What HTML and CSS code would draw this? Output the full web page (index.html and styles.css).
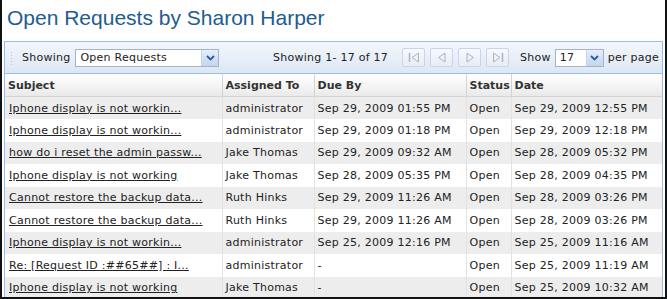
FILE: index.html
```html
<!DOCTYPE html>
<html lang="en">
<head>
    <meta charset="UTF-8">
    <meta name="viewport" content="width=device-width, initial-scale=1.0">
    <title>Open Requests</title>
    <link rel="stylesheet" href="styles.css">
</head>
<body>
<div class="frame">

    <h1 class="title">Open Requests by Sharon Harper</h1>

    <div class="panel">
        <div class="toolbar">
            <span class="handle"></span>
            <span class="label">Showing</span>
            <div class="combo combo-filter">
                <span class="combo-text">Open Requests</span>
                <span class="combo-btn">
                    <svg width="9" height="6" viewBox="0 0 9 6"><path d="M1 1 L4.5 4.5 L8 1" fill="none" stroke="#2b5d9c" stroke-width="1.8"/></svg>
                </span>
            </div>

            <div class="pager">
                <span class="label">Showing 1- 17 of 17</span>
                <div class="pager-btns">
                    <span class="pbtn">
                        <svg width="12" height="11" viewBox="0 0 12 11"><path d="M1.5 1 V10" stroke="#a9b4c4" stroke-width="1.5"/><path d="M10.5 1 L4 5.5 L10.5 10 Z" fill="#eef1f6" stroke="#a9b4c4"/></svg>
                    </span>
                    <span class="pbtn">
                        <svg width="12" height="11" viewBox="0 0 12 11"><path d="M9 1 L2.5 5.5 L9 10 Z" fill="#eef1f6" stroke="#a9b4c4"/></svg>
                    </span>
                    <span class="pbtn">
                        <svg width="12" height="11" viewBox="0 0 12 11"><path d="M3 1 L9.5 5.5 L3 10 Z" fill="#eef1f6" stroke="#a9b4c4"/></svg>
                    </span>
                    <span class="pbtn">
                        <svg width="12" height="11" viewBox="0 0 12 11"><path d="M1.5 1 L8 5.5 L1.5 10 Z" fill="#eef1f6" stroke="#a9b4c4"/><path d="M10.5 1 V10" stroke="#a9b4c4" stroke-width="1.5"/></svg>
                    </span>
                </div>
                <span class="label">Show</span>
                <div class="combo combo-size">
                    <span class="combo-text">17</span>
                    <span class="combo-btn">
                        <svg width="9" height="6" viewBox="0 0 9 6"><path d="M1 1 L4.5 4.5 L8 1" fill="none" stroke="#2b5d9c" stroke-width="1.8"/></svg>
                    </span>
                </div>
                <span class="label">per page</span>
            </div>
        </div>

        <table class="grid">
            <colgroup>
                <col style="width: 217px">
                <col style="width: 92px">
                <col style="width: 152px">
                <col style="width: 45px">
                <col>
            </colgroup>
            <thead>
                <tr>
                    <th>Subject</th>
                    <th>Assigned To</th>
                    <th>Due By</th>
                    <th>Status</th>
                    <th>Date</th>
                </tr>
            </thead>
            <tbody>
                <tr>
                    <td><a href="#">Iphone display is not workin...</a></td>
                    <td>administrator</td>
                    <td>Sep 29, 2009 01:55 PM</td>
                    <td>Open</td>
                    <td>Sep 29, 2009 12:55 PM</td>
                </tr>
                <tr>
                    <td><a href="#">Iphone display is not workin...</a></td>
                    <td>administrator</td>
                    <td>Sep 29, 2009 01:18 PM</td>
                    <td>Open</td>
                    <td>Sep 29, 2009 12:18 PM</td>
                </tr>
                <tr>
                    <td><a href="#">how do i reset the admin passw...</a></td>
                    <td>Jake Thomas</td>
                    <td>Sep 29, 2009 09:32 AM</td>
                    <td>Open</td>
                    <td>Sep 28, 2009 05:32 PM</td>
                </tr>
                <tr>
                    <td><a href="#">Iphone display is not working</a></td>
                    <td>Jake Thomas</td>
                    <td>Sep 28, 2009 05:35 PM</td>
                    <td>Open</td>
                    <td>Sep 28, 2009 04:35 PM</td>
                </tr>
                <tr>
                    <td><a href="#">Cannot restore the backup data...</a></td>
                    <td>Ruth Hinks</td>
                    <td>Sep 29, 2009 11:26 AM</td>
                    <td>Open</td>
                    <td>Sep 28, 2009 03:26 PM</td>
                </tr>
                <tr>
                    <td><a href="#">Cannot restore the backup data...</a></td>
                    <td>Ruth Hinks</td>
                    <td>Sep 29, 2009 11:26 AM</td>
                    <td>Open</td>
                    <td>Sep 28, 2009 03:26 PM</td>
                </tr>
                <tr>
                    <td><a href="#">Iphone display is not workin...</a></td>
                    <td>administrator</td>
                    <td>Sep 25, 2009 12:16 PM</td>
                    <td>Open</td>
                    <td>Sep 25, 2009 11:16 AM</td>
                </tr>
                <tr>
                    <td><a href="#">Re: [Request ID :##65##] : I...</a></td>
                    <td>administrator</td>
                    <td>-</td>
                    <td>Open</td>
                    <td>Sep 25, 2009 11:19 AM</td>
                </tr>
                <tr>
                    <td><a href="#">Iphone display is not working</a></td>
                    <td>Jake Thomas</td>
                    <td>-</td>
                    <td>Open</td>
                    <td>Sep 25, 2009 10:32 AM</td>
                </tr>
            </tbody>
        </table>
    </div>

</div>
</body>
</html>
```

FILE: styles.css
```css
body {
    margin: 0;
    background-color: white;
}

.frame {
    height: 299px;
    box-sizing: border-box;
    border: 2px solid #111; /* dark window edge */
    border-top: none;
    padding: 0 2px;
    overflow: hidden;
}

.title {
    margin: 0;
    height: 41px;
    box-sizing: border-box;
    padding: 6px 0 0 3px;
    font-family: "Liberation Sans", Arial, sans-serif;
    font-size: 21px;
    font-weight: normal;
    line-height: 23px;
    color: #215c91;
}

.panel {
    border: 1px solid #99bbe8;
    font-family: "DejaVu Sans", Verdana, sans-serif;
    font-size: 11px;
    letter-spacing: 0.25px;
    color: #222;
}

/* top toolbar */
.toolbar {
    display: flex;
    align-items: center;
    height: 31px;
    padding: 0 3px 0 5px;
    background: linear-gradient(#f4f7fc, #dce7f4);
    border-bottom: 1px solid #99bbe8;
}

.handle {
    width: 3px;
    height: 14px;
    margin-right: 9px;
    background-image: radial-gradient(circle, #b7c6d9 0.8px, transparent 1px);
    background-size: 3px 3px;
}

.label {
    white-space: nowrap;
    color: #222;
}

.combo {
    display: flex;
    align-items: center;
    height: 18px;
    box-sizing: border-box;
    border: 1px solid #a5b3c8;
    background-color: white;
}

.combo-filter {
    width: 144px;
    margin-left: 5px;
}

.combo-size {
    width: 49px;
    margin: 0 4px;
}

.combo-text {
    flex: 1;
    padding-left: 4px;
    white-space: nowrap;
}

.combo-btn {
    display: flex;
    align-items: center;
    justify-content: center;
    width: 16px;
    height: 16px;
    background: linear-gradient(#e6eefa, #c3d5ee);
    border-left: 1px solid #c7d5e8;
}

.pager {
    display: flex;
    align-items: center;
    margin-left: auto;
}

.pager-btns {
    display: flex;
    gap: 5px;
    margin: 0 11px 0 14px;
}

.pbtn {
    display: flex;
    align-items: center;
    justify-content: center;
    width: 23px;
    height: 19px;
    box-sizing: border-box;
    border: 1px solid #c9d5e4;
    border-radius: 2px;
    background: linear-gradient(#f7f9fc, #e7edf6);
}

/* data grid */
.grid {
    width: 100%;
    table-layout: fixed;
    border-collapse: collapse;
}

.grid th {
    height: 22px;
    padding: 0 3px;
    text-align: left;
    font-weight: bold;
    letter-spacing: 0;
    color: #333;
    white-space: nowrap;
    overflow: hidden;
    background: linear-gradient(#ffffff, #f3f3f3 60%, #e9e9e9);
    border-bottom: 1px solid #d4d4d4;
}

.grid th + th {
    border-left: 1px solid #d3d3d3;
}

.grid tbody tr {
    height: 22.5px;
}

.grid tbody tr:nth-child(odd) {
    background-color: #ededed;
}

.grid td {
    padding: 0 3px;
    white-space: nowrap;
    overflow: hidden;
}

.grid td:first-child {
    padding-left: 4px;
}

.grid td + td {
    border-left: 1px solid #e2e2e2;
}

.grid a {
    color: #222;
}
```
